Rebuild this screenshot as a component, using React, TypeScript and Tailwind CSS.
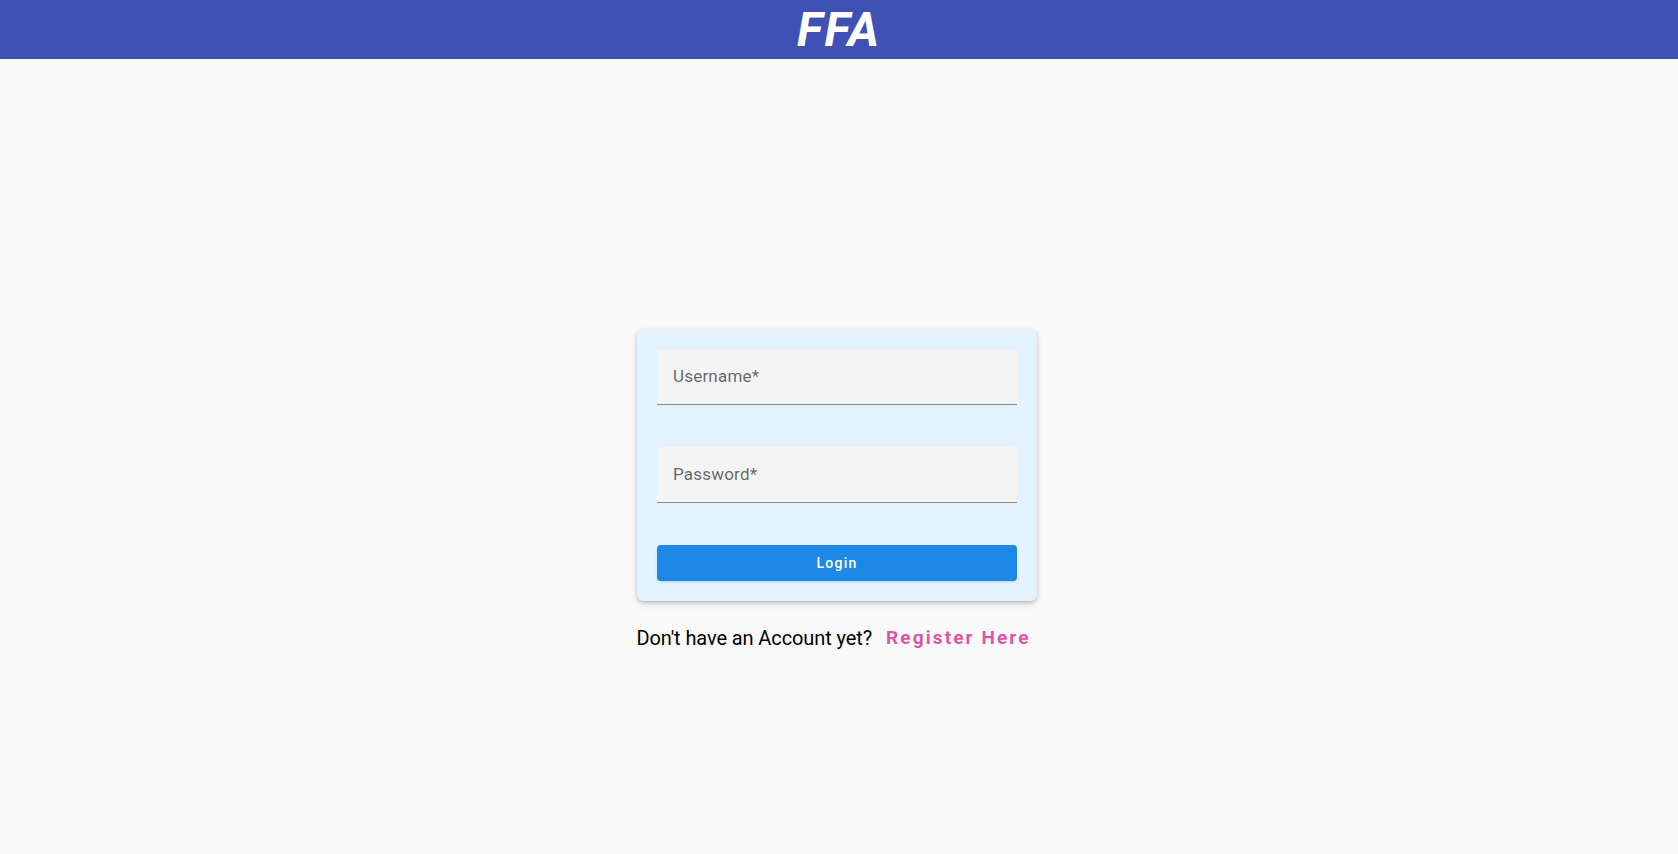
import { useState } from 'react'

export default function App() {
  const [username, setUsername] = useState('')
  const [password, setPassword] = useState('')

  return (
    <div className="min-h-screen bg-[#fafafa] font-['Roboto','Liberation_Sans',sans-serif]">
      {/* top bar */}
      <header className="h-[59px] bg-[#3f51b5] flex items-center justify-center">
        <h1 className="text-white text-[48px] font-bold italic leading-none tracking-[2px]">FFA</h1>
      </header>

      <main className="flex flex-col items-center pt-[270px] pr-1">
        <form
          className="w-[400px] bg-[#e3f2fd] rounded-md p-5 shadow-[0_3px_6px_rgba(0,0,0,0.18),0_1px_3px_rgba(0,0,0,0.12)]"
          onSubmit={(e) => e.preventDefault()}
        >
          <div className="h-[56px] bg-[#f4f4f4] rounded-t-[4px] border-b border-[#8a8a8a] flex items-center px-4 mb-[42px]">
            <input
              value={username}
              onChange={(e) => setUsername(e.target.value)}
              placeholder="Username*"
              className="w-full bg-transparent outline-none text-[17px] text-black/85 placeholder:text-black/60 tracking-[0.2px]"
            />
          </div>
          <div className="h-[56px] bg-[#f4f4f4] rounded-t-[4px] border-b border-[#8a8a8a] flex items-center px-4 mb-[42px]">
            <input
              type="password"
              value={password}
              onChange={(e) => setPassword(e.target.value)}
              placeholder="Password*"
              className="w-full bg-transparent outline-none text-[17px] text-black/85 placeholder:text-black/60 tracking-[0.2px]"
            />
          </div>
          <button
            type="submit"
            className="w-full h-9 rounded-[4px] bg-[#1e88e5] text-white text-[14px] font-medium tracking-[1.2px] shadow-sm"
          >
            Login
          </button>
        </form>

        <div className="flex items-center gap-[14px] mt-[26px] ml-[-7px]">
          <span className="text-[20px] text-black leading-[22px] tracking-[-0.1px]">Don't have an Account yet?</span>
          <a href="#" className="text-[19px] font-bold text-[#df55a6] tracking-[2.1px] leading-[22px]">
            Register Here
          </a>
        </div>
      </main>
    </div>
  )
}
